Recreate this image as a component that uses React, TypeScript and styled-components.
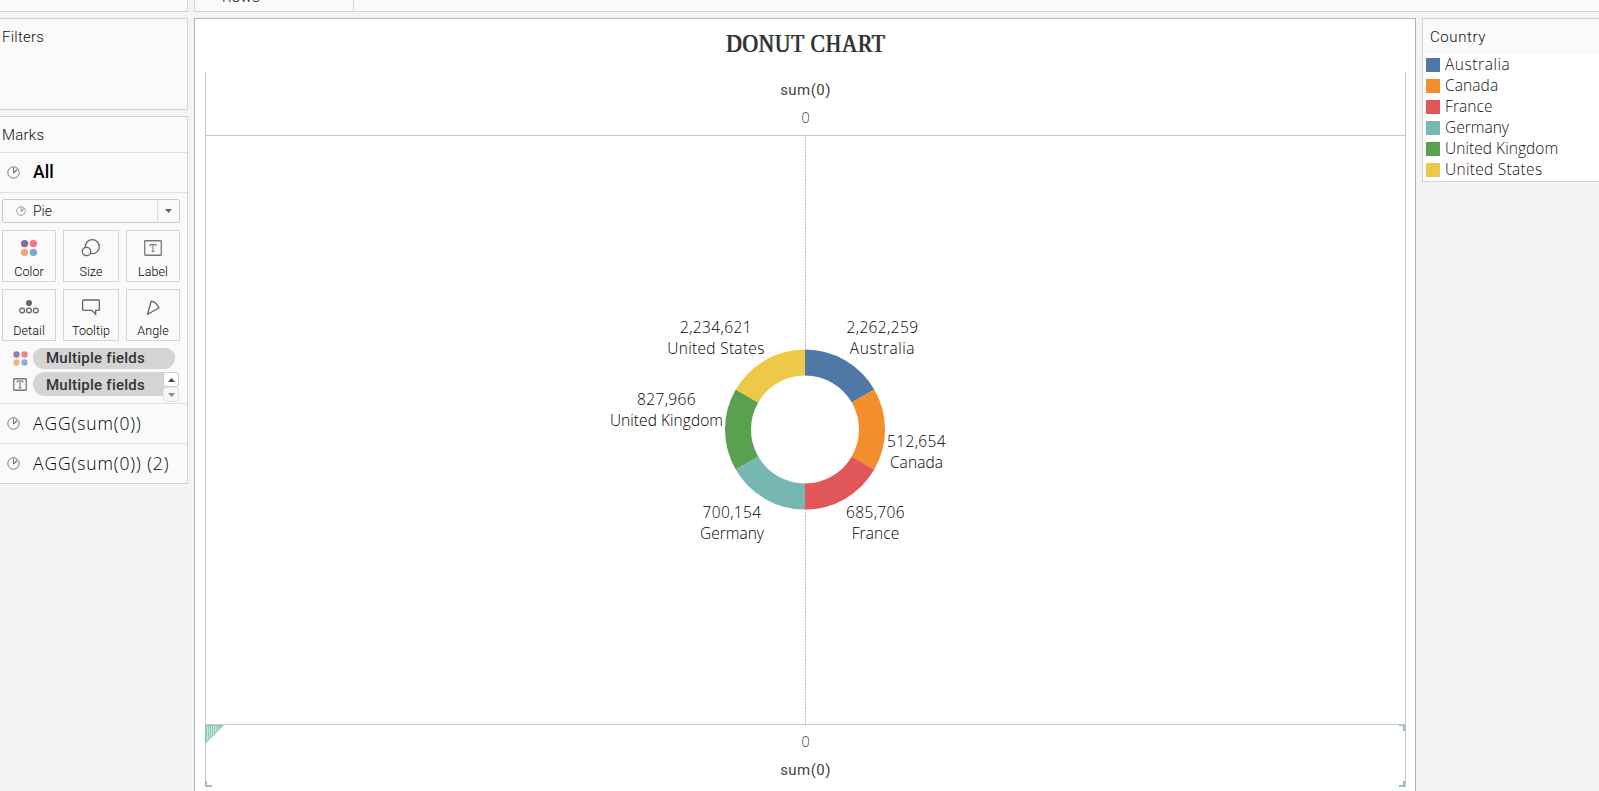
import React from 'react';
import styled, { createGlobalStyle } from 'styled-components';

const UI = `Roboto, "Liberation Sans", sans-serif`;
const BOOK = `"Open Sans", "Noto Sans", sans-serif`;

const Global = createGlobalStyle`
  *, *::before, *::after { box-sizing: border-box; }
  html, body { margin: 0; height: 100%; overflow: hidden; background: #f4f4f4; }
`;

const Workspace = styled.div`
  display: flex;
  gap: 6px;
  width: 1599px;
  height: 791px;
  overflow: hidden;
  background: #f4f4f4;
  font-family: ${UI};
  font-weight: 300;
  color: #111;
`;
const Sidebar = styled.aside`
  display: flex;
  flex-direction: column;
  gap: 6px;
  width: 188px;
  flex: none;
`;
const Card = styled.section<{ $h: number }>`
  height: ${p => p.$h}px;
  flex: none;
  background: #fafafa;
  border: 1px solid #d4d4d4;
  border-left: 0;
`;
const ShelfEnd = styled(Card)`
  border-top: 0;
`;
const CardTitle = styled.div<{ $h: number }>`
  height: ${p => p.$h}px;
  padding-left: 2px;
  line-height: 36px;
  font-size: 15px;
  letter-spacing: 0.25px;
`;
const MarkRow = styled.div<{ $bold?: boolean; $spacing: number }>`
  display: flex;
  align-items: center;
  gap: 13px;
  height: 40px;
  padding: 0 0 1px 7px;
  border-top: 1px solid #e0e0e0;
  font-family: ${p => (p.$bold ? UI : BOOK)};
  font-weight: ${p => (p.$bold ? 500 : 300)};
  font-size: 17.5px;
  line-height: ${p => (p.$bold ? 22 : 24)}px;
  letter-spacing: ${p => p.$spacing}px;
  color: #000;
  white-space: nowrap;
`;
const MarkName = styled.span`
  margin-top: -1px;
`;
const MarkBody = styled.div`
  height: 211px;
  padding: 6px 7px 0 2px;
  border-top: 1px solid #e0e0e0;
`;
const TypeSelect = styled.div`
  display: flex;
  align-items: center;
  height: 24px;
  border: 1px solid #c9c9c9;
  border-radius: 2px;
  padding-left: 13px;
  font-size: 14px;
  gap: 7px;
`;
const SelectArrow = styled.span`
  display: flex;
  align-items: center;
  justify-content: center;
  width: 22px;
  height: 22px;
  margin-left: auto;
  border-left: 1px solid #dcdcdc;
`;
const Properties = styled.div`
  display: grid;
  grid-template-columns: 54px 56px 54px;
  grid-auto-rows: 52px;
  justify-content: space-between;
  row-gap: 7px;
  margin-top: 7px;
`;
const Property = styled.div`
  display: flex;
  flex-direction: column;
  align-items: center;
  border: 1px solid #d4d4d4;
  padding-top: 6px;
  font-size: 12.5px;
  letter-spacing: 0.1px;
  line-height: 17px;
  color: #000;
  gap: 6px;
`;
const Pills = styled.div`
  position: relative;
  display: flex;
  flex-direction: column;
  gap: 3px;
  margin-top: 7px;
`;
const PillRow = styled.div`
  display: flex;
  align-items: center;
  padding-left: 10px;
`;
const PillIcon = styled.span`
  display: flex;
  width: 21px;
  padding-left: 1px;
`;
const Pill = styled.div<{ $clipped?: boolean }>`
  width: 142px;
  height: ${p => (p.$clipped ? 21 : 24)}px;
  padding-left: 13px;
  border-radius: ${p => (p.$clipped ? '10px 10px 12px 12px' : '12px')};
  background: #d4d4d4;
  color: #333;
  font-size: 15px;
  font-weight: 500;
  letter-spacing: 0.25px;
  line-height: ${p => (p.$clipped ? 20 : 26)}px;
`;
const Scroller = styled.div`
  position: absolute;
  right: 1px;
  top: 24px;
`;
const ScrollButton = styled.div<{ $dim?: boolean }>`
  display: flex;
  align-items: center;
  justify-content: center;
  width: 16px;
  height: 15px;
  border: 1px solid ${p => (p.$dim ? '#e3e3e3' : '#cfcfcf')};
  border-radius: 3px;
  background: ${p => (p.$dim ? '#f7f7f7' : '#fff')};
`;
const Main = styled.main`
  display: flex;
  flex-direction: column;
  gap: 6px;
  flex: 1;
  min-width: 0;
`;
const RowsShelf = styled.div`
  display: flex;
  height: 12px;
  flex: none;
  background: #fafafa;
  border-left: 1px solid #d4d4d4;
  border-bottom: 1px solid #d4d4d4;
`;
const ShelfName = styled.div`
  width: 159px;
  flex: none;
  border-right: 1px solid #d4d4d4;
  padding-left: 27px;
  font-size: 15px;
  letter-spacing: 0.3px;
  line-height: 18px;
  margin-top: -12px;
`;
const Lower = styled.div`
  display: flex;
  gap: 6px;
  flex: 1;
  min-height: 0;
`;
const Sheet = styled.section`
  width: 1222px;
  flex: none;
  padding: 0 9px 0 10px;
  background: #fff;
  border: 1px solid #b3b3b3;
  border-bottom: 0;
`;
const SheetTitle = styled.h1`
  height: 53px;
  margin: 0;
  padding-top: 10px;
  text-align: center;
  font: normal 25px/30px "Liberation Serif", serif;
  letter-spacing: 0.8px;
  color: #333;
  text-shadow: 1px 0 #333;
  transform: scaleX(0.86);
`;
const View = styled.div`
  height: 715px;
  border: 1px solid #c8c8c8;
  border-width: 0 1px;
`;
const Axis = styled.div<{ $bottom?: boolean }>`
  position: relative;
  display: flex;
  flex-direction: ${p => (p.$bottom ? 'column-reverse' : 'column')};
  justify-content: flex-end;
  align-items: center;
  gap: ${p => (p.$bottom ? 2 : 0)}px;
  height: ${p => (p.$bottom ? 62 : 63)}px;
  padding: ${p => (p.$bottom ? '3px 0 0' : '0 0 5px')};
  font-family: ${BOOK};
`;
const AxisTitle = styled.div`
  font: 400 15px/28px ${UI};
  letter-spacing: 0.45px;
  color: #444;
`;
const Tick = styled.div`
  font-size: 15px;
  line-height: 26px;
  color: #444;
`;
const Pane = styled.div`
  position: relative;
  height: 590px;
  border: 1px solid #c8c8c8;
  border-width: 1px 0;
`;
const Drawing = styled.svg`
  display: block;
`;
const Mark = styled.div<{ $x: number; $y: number }>`
  position: absolute;
  left: ${p => p.$x}px;
  top: ${p => p.$y}px;
  transform: translateX(-50%);
  text-align: center;
  font-family: ${BOOK};
  font-size: 15.5px;
  line-height: 21px;
  white-space: nowrap;
  color: #000;
`;
const Value = styled.div`
  letter-spacing: 0.4px;
`;
const Name = styled.span<{ $track: number }>`
  letter-spacing: ${p => p.$track}px;
`;
const Corner = styled.svg<{ $side: 'left' | 'right'; $edge: 'top' | 'bottom' }>`
  position: absolute;
  ${p => p.$side}: ${p => (p.$side === 'left' ? -1 : 0)}px;
  ${p => p.$edge}: 0;
`;
const Legend = styled.section`
  flex: 1;
  height: 164px;
  background: #fff;
  border: 1px solid #d4d4d4;
  border-right: 0;
`;
const LegendTitle = styled.div`
  height: 35px;
  padding-left: 7px;
  background: #fafafa;
  font-size: 15px;
  letter-spacing: 0.6px;
  line-height: 36px;
`;
const LegendItem = styled.div`
  display: flex;
  align-items: center;
  gap: 5px;
  height: 21px;
  padding-left: 3px;
  font-family: ${BOOK};
  font-size: 15.5px;
  line-height: 21px;
  color: #111;
`;
const Swatch = styled.i<{ $c: string }>`
  width: 14px;
  height: 14px;
  background: ${p => p.$c};
`;

const slices = [
  { name: 'Australia', value: '2,262,259', color: '#4e79a7', x: 676.5, y: 181, track: 0.55 },
  { name: 'Canada', value: '512,654', color: '#f28e2b', x: 710.5, y: 295, track: 0.1 },
  { name: 'France', value: '685,706', color: '#e15759', x: 669.5, y: 366, track: 0.1 },
  { name: 'Germany', value: '700,154', color: '#76b7b2', x: 526, y: 366, track: 0 },
  { name: 'United Kingdom', value: '827,966', color: '#59a14f', x: 460.5, y: 253, track: 0.05 },
  { name: 'United States', value: '2,234,621', color: '#edc948', x: 510, y: 181, track: 0.3 },
];

const CX = 599;
const CY = 293.6;

function arc(i: number) {
  const at = (r: number, k: number) => {
    const a = (k * Math.PI) / 3;
    return `${(CX + r * Math.sin(a)).toFixed(2)} ${(CY - r * Math.cos(a)).toFixed(2)}`;
  };
  return `M${at(80, i)}A80 80 0 0 1 ${at(80, i + 1)}L${at(54, i + 1)}A54 54 0 0 0 ${at(54, i)}Z`;
}

const PieIcon = ({ size = 13, color = '#777' }) => (
  <svg width={size} height={size} viewBox="0 0 13 13" fill="none" stroke={color}>
    <circle cx="6.5" cy="6.5" r="5.7" />
    <path d="M6.5 7V1.5M6.3 6.9L10.7 2.6M6.5 6.8L9.3 5.2V3.8" />
  </svg>
);
const Dots = ({ w = 16 }) => (
  <svg width={w} height={w} viewBox="0 0 16 16">
    <circle cx="3.7" cy="3.7" r="3.4" fill="#92809f" />
    <circle cx="12.3" cy="3.7" r="3.4" fill="#f8808d" />
    <circle cx="3.7" cy="12.3" r="3.4" fill="#f4b088" />
    <circle cx="12.3" cy="12.3" r="3.4" fill="#8fafd2" />
  </svg>
);
const TextIcon = ({ w = 18, h = 16 }) => (
  <svg width={w} height={h} viewBox={`0 0 ${w} ${h}`} fill="none" stroke="#777">
    <rect x=".75" y=".75" width={w - 1.5} height={h - 1.5} rx=".5" strokeWidth="1.3" />
    <path d={`M${w / 2 - 2.8} ${h / 2 - 1.7}v-1.8h5.6v1.8M${w / 2} ${h / 2 - 3.5}v7M${w / 2 - 1.5} ${h / 2 + 3.5}h3`} strokeWidth="1.1" />
  </svg>
);
const Triangle = ({ up = false, color = '#666', w = 7 }) => (
  <svg width={w} height="4" viewBox="0 0 8 4" preserveAspectRatio="none">
    <path d={up ? 'M0 4L4 0L8 4Z' : 'M0 0L4 4L8 0Z'} fill={color} />
  </svg>
);

const Icon = ({ kind }: { kind: string }) => {
  if (kind === 'Label')
    return (
      <svg width="20" height="20" viewBox="-1 -3 20 20">
        <TextIcon />
      </svg>
    );
  return (
    <svg width="20" height="20" viewBox="0 0 20 20" fill="none" stroke="#666" strokeWidth="1.3">
      {kind === 'Color' && (
        <g stroke="none">
          <circle cx="5.6" cy="6.6" r="3.7" fill="#856b98" />
          <circle cx="14.4" cy="6.6" r="3.7" fill="#fb7185" />
          <circle cx="5.6" cy="15.4" r="3.7" fill="#f4a77b" />
          <circle cx="14.4" cy="15.4" r="3.7" fill="#7fa5cc" />
        </g>
      )}
      {kind === 'Size' && (
        <>
          <circle cx="11.3" cy="9.7" r="7" />
          <circle cx="5.5" cy="14.5" r="4.2" fill="#fafafa" />
        </>
      )}
      {kind === 'Detail' && (
        <>
          <circle cx="10" cy="7" r="3" fill="#666" stroke="none" />
          <circle cx="3.2" cy="14.5" r="2.4" />
          <circle cx="10" cy="14.5" r="2.4" />
          <circle cx="16.8" cy="14.5" r="2.4" />
        </>
      )}
      {kind === 'Tooltip' && <path d="M2.6 4h14.8q1 0 1 1v8.4q0 1-1 1H14.6v3.8L10.8 14.4H2.6q-1 0-1-1V5q0-1 1-1Z" />}
      {kind === 'Angle' && <path d="M8.2 5.2Q13.5 6.2 16 12L4.5 18.3Z" strokeLinejoin="round" />}
    </svg>
  );
};

export default function App() {
  return (
    <>
      <Global />
      <Workspace>
        <Sidebar>
          <ShelfEnd $h={12} />
          <Card $h={92}>
            <CardTitle $h={36}>Filters</CardTitle>
          </Card>
          <Card $h={368}>
            <CardTitle $h={35}>Marks</CardTitle>
            <MarkRow $bold $spacing={0.1}>
              <PieIcon />
              <MarkName>All</MarkName>
            </MarkRow>
            <MarkBody>
              <TypeSelect>
                <PieIcon size={10} color="#888" />
                Pie
                <SelectArrow>
                  <Triangle />
                </SelectArrow>
              </TypeSelect>
              <Properties>
                {['Color', 'Size', 'Label', 'Detail', 'Tooltip', 'Angle'].map(k => (
                  <Property key={k}>
                    <Icon kind={k} />
                    {k}
                  </Property>
                ))}
              </Properties>
              <Pills>
                <PillRow>
                  <PillIcon>
                    <Dots w={15} />
                  </PillIcon>
                  <Pill $clipped>Multiple fields</Pill>
                </PillRow>
                <PillRow>
                  <PillIcon>
                    <TextIcon w={14} h={13} />
                  </PillIcon>
                  <Pill>Multiple fields</Pill>
                </PillRow>
                <Scroller>
                  <ScrollButton>
                    <Triangle up color="#34495e" />
                  </ScrollButton>
                  <ScrollButton $dim>
                    <Triangle color="#888" />
                  </ScrollButton>
                </Scroller>
              </Pills>
            </MarkBody>
            <MarkRow $spacing={0.9}>
              <PieIcon />
              <MarkName>AGG(sum(0))</MarkName>
            </MarkRow>
            <MarkRow $spacing={0.9}>
              <PieIcon />
              <MarkName>AGG(sum(0)) (2)</MarkName>
            </MarkRow>
          </Card>
        </Sidebar>
        <Main>
          <RowsShelf>
            <ShelfName>Rows</ShelfName>
          </RowsShelf>
          <Lower>
            <Sheet>
              <SheetTitle>DONUT CHART</SheetTitle>
              <View>
                <Axis>
                  <AxisTitle>sum(0)</AxisTitle>
                  <Tick>0</Tick>
                </Axis>
                <Pane>
                  <Drawing width="1199" height="588">
                    <path d="M599.5 1V588" stroke="#bdbdbd" strokeDasharray="2 1" />
                    <circle cx={CX} cy={CY} r="54" fill="#fff" />
                    {slices.map((s, i) => (
                      <path key={s.name} d={arc(i)} fill={s.color} />
                    ))}
                  </Drawing>
                  {slices.map(s => (
                    <Mark key={s.name} $x={s.x} $y={s.y}>
                      <Value>{s.value}</Value>
                      <Name $track={s.track}>{s.name}</Name>
                    </Mark>
                  ))}
                </Pane>
                <Axis $bottom>
                  <AxisTitle>sum(0)</AxisTitle>
                  <Tick>0</Tick>
                  <Corner $side="left" $edge="top" width="19" height="19">
                    <path d="M0 0H19L0 19Z" fill="#8ecab2" />
                    <path d="M2.5 1V15M4.5 1V13M6.5 1V11M8.5 1V9M10.5 1V7M12.5 1V5" stroke="#c9ebdc" />
                  </Corner>
                  <Corner $side="right" $edge="top" width="6" height="6">
                    <path d="M0 0H6V6H4V1H0Z" fill="#8ecab2" />
                  </Corner>
                  <Corner $side="left" $edge="bottom" width="7" height="6">
                    <path d="M0 0H2V4H7V6H0Z" fill="#8ecab2" />
                  </Corner>
                  <Corner $side="right" $edge="bottom" width="6" height="6">
                    <path d="M4 0H6V6H0V4H4Z" fill="#8ecab2" />
                  </Corner>
                </Axis>
              </View>
            </Sheet>
            <Legend>
              <LegendTitle>Country</LegendTitle>
              {slices.map(s => (
                <LegendItem key={s.name}>
                  <Swatch $c={s.color} />
                  <Name $track={s.track}>{s.name}</Name>
                </LegendItem>
              ))}
            </Legend>
          </Lower>
        </Main>
      </Workspace>
    </>
  );
}
